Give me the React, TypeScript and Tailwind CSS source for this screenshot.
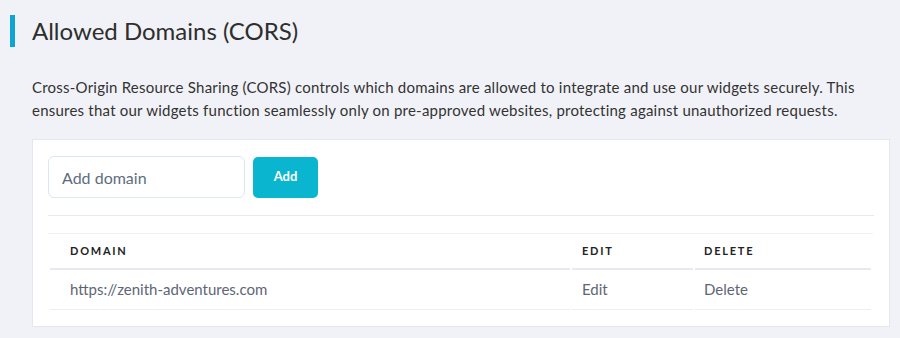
export default function App() {
  return (
    <div className="min-h-[338px] w-[900px] bg-[#f1f2f7] font-['Lato',sans-serif] text-[#333]">
      <div className="flex items-center pl-[10px] pt-[15px]">
        <div className="h-[32px] w-[5px] bg-[#0ea5d6]"></div>
        <h1 className="ml-[17px] text-[24px] leading-[32px] text-[#2e2e2e]">Allowed Domains (CORS)</h1>
      </div>

      <p className="ml-[32px] mt-[29px] w-[850px] text-[15px] leading-[23px] tracking-[0.015em] text-[#333]">
        Cross-Origin Resource Sharing (CORS) controls which domains are allowed to integrate and use our widgets
        securely. This ensures that our widgets function seamlessly only on pre-approved websites, protecting against
        unauthorized requests.
      </p>

      <div className="ml-[32px] mt-[17px] w-[858px] border border-[#e4e7ef] bg-white px-[15px] pb-[16px] pt-[16px]">
        <div className="flex items-center gap-[8px] border-b border-[#e6e9ef] pb-[17px]">
          <input
            placeholder="Add domain"
            className="h-[42px] w-[197px] rounded-[6px] border border-[#dce6f2] px-[13px] text-[16px] text-[#333] outline-none placeholder:text-[#5d6d7e]"
          />
          <button className="h-[41px] w-[65px] rounded-[5px] bg-[#0ab6cf] text-[13px] font-bold text-white">Add</button>
        </div>

        <table className="mt-[17px] w-[825px] border-separate border-spacing-x-[2px] border-spacing-y-0 border-t border-[#eef0f4]">
          <thead>
            <tr className="text-left text-[11px] font-bold uppercase tracking-[0.16em] text-[#222]">
              <th className="h-[36px] w-[520px] border-b-2 border-[#e8e9ee] pl-[20px] font-bold">Domain</th>
              <th className="h-[36px] w-[121px] border-b-2 border-[#e8e9ee] pl-[10px] font-bold">Edit</th>
              <th className="h-[36px] border-b-2 border-[#e8e9ee] pl-[9px] font-bold">Delete</th>
            </tr>
          </thead>
          <tbody>
            <tr className="text-[15px] text-[#5e6675]">
              <td className="h-[40px] border-b border-[#eceef2] pl-[20px]">https://zenith-adventures.com</td>
              <td className="h-[40px] border-b border-[#eceef2] pl-[10px]">Edit</td>
              <td className="h-[40px] border-b border-[#eceef2] pl-[9px]">Delete</td>
            </tr>
          </tbody>
        </table>
      </div>
    </div>
  )
}
